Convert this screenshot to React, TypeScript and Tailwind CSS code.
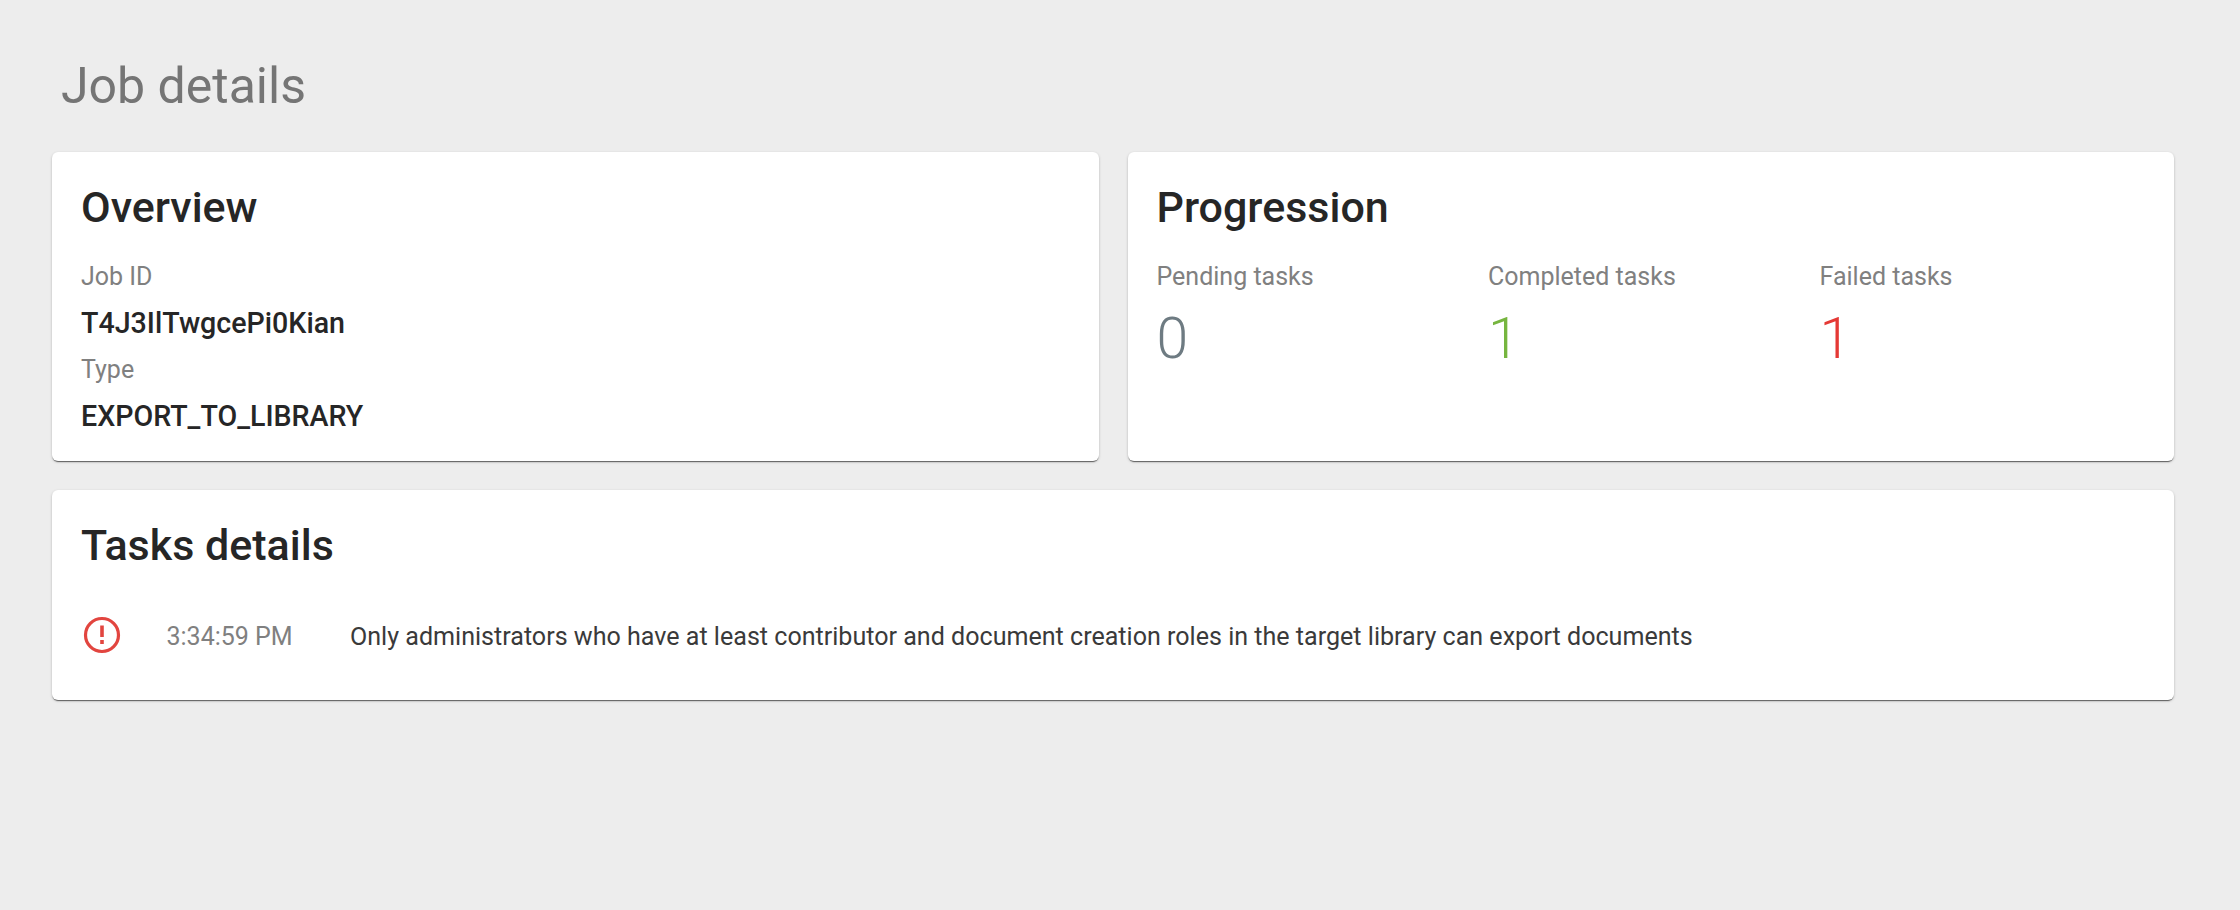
const cardClass = "rounded-[6px] bg-white shadow-[0_1px_3px_rgba(0,0,0,0.2),0_1px_1px_rgba(0,0,0,0.14),0_2px_1px_-1px_rgba(0,0,0,0.45)]";

function Stat({ label, value, color }: { label: string; value: string; color: string }) {
  return (
    <div className="w-[331.5px] shrink-0">
      <div className="text-[25px] leading-[36px] text-[#808080]">{label}</div>
      <div className={`mt-[8px] text-[57px] leading-[72px] font-[350] ${color}`}>{value}</div>
    </div>
  );
}

export default function App() {
  return (
    <div className="min-h-[910px] bg-[#ededed] pr-[66px] pl-[52px] font-['Roboto',sans-serif]">
      <h1 className="pt-[52px] pl-[9px] pb-[1px] text-[50px] leading-[68px] font-normal text-[#757575]">Job details</h1>
      <div className="mt-[31px] grid grid-cols-2 gap-[29px]">
        <section className={`${cardClass} h-[309px] px-[29px] pt-[28px]`}>
          <h2 className="text-[43px] leading-[54px] font-medium text-[#262626]">Overview</h2>
          <div className="mt-[25px] text-[25px] leading-[36px] text-[#808080]">Job ID</div>
          <div className="mt-[9px] text-[28.6px] leading-[38px] font-medium text-[#262626]">T4J3IlTwgcePi0Kian</div>
          <div className="mt-[10px] text-[25px] leading-[36px] text-[#808080]">Type</div>
          <div className="mt-[9px] text-[28.6px] leading-[38px] font-medium text-[#262626]">EXPORT_TO_LIBRARY</div>
        </section>
        <section className={`${cardClass} h-[309px] px-[29px] pt-[28px]`}>
          <h2 className="text-[43px] leading-[54px] font-medium text-[#262626]">Progression</h2>
          <div className="mt-[25px] flex">
            <Stat label="Pending tasks" value="0" color="text-[#6e7b82]" />
            <Stat label="Completed tasks" value="1" color="text-[#76b53f]" />
            <Stat label="Failed tasks" value="1" color="text-[#e53935]" />
          </div>
        </section>
      </div>
      <section className={`${cardClass} mt-[29px] h-[210px] px-[29px] pt-[28px]`}>
        <h2 className="text-[43px] leading-[54px] font-medium text-[#262626]">Tasks details</h2>
        <div className="mt-[45px] flex items-center">
          <svg className="ml-[1px] h-[40px] w-[40px] shrink-0 overflow-visible" viewBox="0 2 40 40" fill="none" aria-hidden>
            <circle cx="20" cy="20" r="16.5" stroke="#e2453f" strokeWidth="3.2" />
            <path d="M20 10.5v11.5" stroke="#e2453f" strokeWidth="3.6" />
            <path d="M20 25v4" stroke="#e2453f" strokeWidth="3.6" />
          </svg>
          <span className="ml-[44.5px] w-[184.5px] shrink-0 text-[25px] leading-[36px] text-[#808080]">3:34:59 PM</span>
          <span className="ml-[-1px] text-[25.08px] leading-[36px] text-[#3a3a3a]">Only administrators who have at least contributor and document creation roles in the target library can export documents</span>
        </div>
      </section>
    </div>
  );
}
